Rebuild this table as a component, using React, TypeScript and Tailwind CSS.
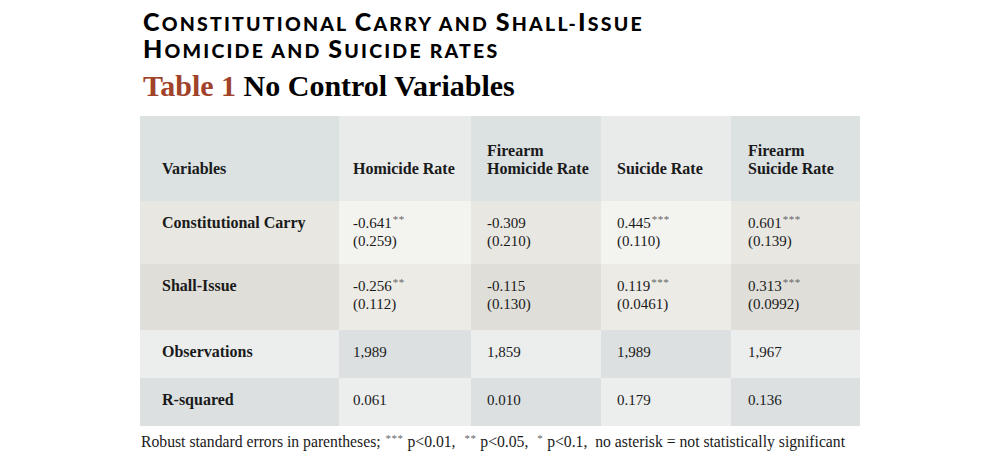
import React from 'react';

type Cell = { value: string; stars?: string; se?: string };

interface Row {
  label: string;
  height: string;
  cells: Cell[];
  bgs: string[];
}

const headerLines: string[][] = [
  ['Homicide Rate'],
  ['Firearm', 'Homicide Rate'],
  ['Suicide Rate'],
  ['Firearm', 'Suicide Rate'],
];
const headerBgs = ['bg-[#dce1e2]', 'bg-[#e9ebeb]', 'bg-[#dce1e2]', 'bg-[#e9ebeb]', 'bg-[#dce1e2]'];

const rows: Row[] = [
  {
    label: 'Constitutional Carry',
    height: 'h-[63px]',
    cells: [
      { value: '-0.641', stars: '**', se: '(0.259)' },
      { value: '-0.309', se: '(0.210)' },
      { value: '0.445', stars: '***', se: '(0.110)' },
      { value: '0.601', stars: '***', se: '(0.139)' },
    ],
    bgs: ['bg-[#e8e7e2]', 'bg-[#f3f3f0]', 'bg-[#e8e7e2]', 'bg-[#f3f3f0]', 'bg-[#e8e7e2]'],
  },
  {
    label: 'Shall-Issue',
    height: 'h-[66px]',
    cells: [
      { value: '-0.256', stars: '**', se: '(0.112)' },
      { value: '-0.115', se: '(0.130)' },
      { value: '0.119', stars: '***', se: '(0.0461)' },
      { value: '0.313', stars: '***', se: '(0.0992)' },
    ],
    bgs: ['bg-[#dfded8]', 'bg-[#ecebe6]', 'bg-[#dfded8]', 'bg-[#ecebe6]', 'bg-[#dfded8]'],
  },
  {
    label: 'Observations',
    height: 'h-[48px]',
    cells: [{ value: '1,989' }, { value: '1,859' }, { value: '1,989' }, { value: '1,967' }],
    bgs: ['bg-[#eceeee]', 'bg-[#dce0e1]', 'bg-[#eceeee]', 'bg-[#dce0e1]', 'bg-[#eceeee]'],
  },
  {
    label: 'R-squared',
    height: 'h-[48px]',
    cells: [{ value: '0.061' }, { value: '0.010' }, { value: '0.179' }, { value: '0.136' }],
    bgs: ['bg-[#dce0e1]', 'bg-[#eceeee]', 'bg-[#dce0e1]', 'bg-[#eceeee]', 'bg-[#dce0e1]'],
  },
];

const colWidths = ['w-[199px]', 'w-[132px]', 'w-[130px]', 'w-[130px]', 'w-[129px]'];
const colPads = ['pl-[22px]', 'pl-[14px]', 'pl-[16px]', 'pl-[16px]', 'pl-[17px]'];

// Small-caps heading: real capitals large, the rest as smaller uppercase
const SmallCaps = ({ text }: { text: string }) => (
  <>
    {text.split('').map((ch, i) =>
      /[A-Z]/.test(ch) ? (
        <span key={i} className="text-[25px] leading-[20px]">
          {ch}
        </span>
      ) : (
        <span key={i}>{ch.toUpperCase()}</span>
      )
    )}
  </>
);

const Stars = ({ s }: { s: string }) => (
  <sup className="ml-px text-[11px] tracking-[0.5px] text-[#666]">{s}</sup>
);

const App = () => {
  return (
    <div className="min-h-[464px] w-[1000px] bg-white">
      <div className="mx-auto w-[720px] pt-[11px]">
        <div className="flex flex-col gap-[3px] font-['Lato',sans-serif] text-[19.5px] leading-[23px] font-black tracking-[2.2px] text-black">
          <div className="pl-[3px]">
            <SmallCaps text="Constitutional Carry and Shall-Issue" />
          </div>
          <div className="pl-[3px]">
            <SmallCaps text="Homicide and Suicide rates" />
          </div>
        </div>
        <div className="mt-[6px] pl-[3px] font-['Liberation_Serif',serif] text-[30px] leading-[36px] font-bold text-black">
          <span className="text-[#a0432a]">Table 1</span> No Control Variables
        </div>

        <div className="mt-[12px] flex flex-col font-['Liberation_Serif',serif] text-[#1a1a1a]">
          <div className="flex h-[85px]">
            <div className={`${colWidths[0]} ${colPads[0]} ${headerBgs[0]} flex items-end pb-[23px] text-[16px] leading-[18px] font-bold`}>
              Variables
            </div>
            {headerLines.map((lines, i) => (
              <div
                key={i}
                className={`${colWidths[i + 1]} ${colPads[i + 1]} ${headerBgs[i + 1]} flex flex-col justify-end pb-[23px] text-[16px] leading-[18px] font-bold`}
              >
                {lines.map((l) => (
                  <span key={l}>{l}</span>
                ))}
              </div>
            ))}
          </div>

          {rows.map((row) => (
            <div key={row.label} className={`flex ${row.height}`}>
              <div className={`${colWidths[0]} ${colPads[0]} ${row.bgs[0]} pt-[13px] text-[16px] leading-[18px] font-bold`}>
                {row.label}
              </div>
              {row.cells.map((cell, i) => (
                <div
                  key={i}
                  className={`${colWidths[i + 1]} ${colPads[i + 1]} ${row.bgs[i + 1]} pt-[13px] text-[15px] leading-[18px]`}
                >
                  <div>
                    {cell.value}
                    {cell.stars && <Stars s={cell.stars} />}
                  </div>
                  {cell.se && <div>{cell.se}</div>}
                </div>
              ))}
            </div>
          ))}
        </div>

        <div className="mt-[6px] pl-px font-['Liberation_Serif',serif] text-[15.7px] leading-[20px] whitespace-pre text-[#1a1a1a]">
          Robust standard errors in parentheses; <Stars s="***" /> p&lt;0.01,  <Stars s="**" /> p&lt;0.05,  <Stars s="*" /> p&lt;0.1,  no asterisk = not statistically significant
        </div>
      </div>
    </div>
  );
};

export default App;
